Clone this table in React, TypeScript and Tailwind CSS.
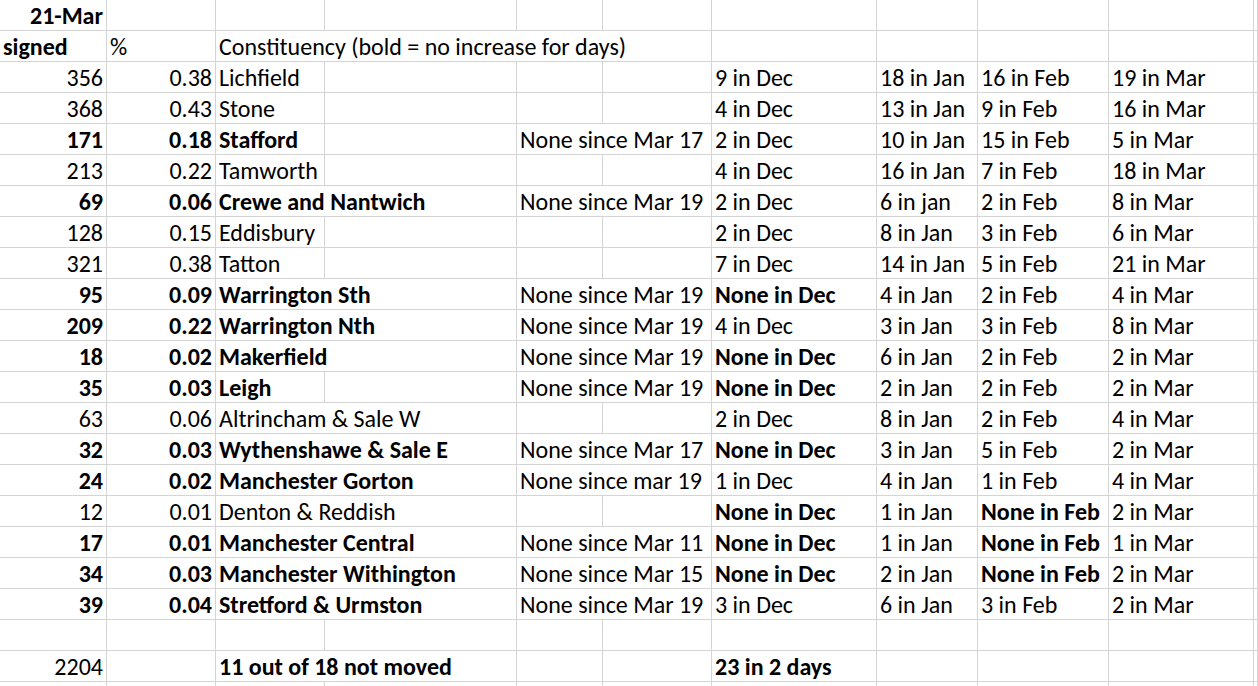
type Cell = {
  text?: string;
  right?: boolean;
  bold?: boolean;
  span?: number;
};

type Row = {
  signed: string;
  pct: string;
  name: string;
  since?: string;
  dec: string;
  jan: string;
  feb: string;
  mar: string;
  bold?: boolean;
};

const rows: Row[] = [
  { signed: '356', pct: '0.38', name: 'Lichfield', dec: '9 in Dec', jan: '18 in Jan', feb: '16 in Feb', mar: '19 in Mar' },
  { signed: '368', pct: '0.43', name: 'Stone', dec: '4 in Dec', jan: '13 in Jan', feb: '9 in Feb', mar: '16 in Mar' },
  { signed: '171', pct: '0.18', name: 'Stafford', since: 'None since Mar 17', dec: '2 in Dec', jan: '10 in Jan', feb: '15 in Feb', mar: '5 in Mar', bold: true },
  { signed: '213', pct: '0.22', name: 'Tamworth', dec: '4 in Dec', jan: '16 in Jan', feb: '7 in Feb', mar: '18 in Mar' },
  { signed: '69', pct: '0.06', name: 'Crewe and Nantwich', since: 'None since Mar 19', dec: '2 in Dec', jan: '6 in jan', feb: '2 in Feb', mar: '8 in Mar', bold: true },
  { signed: '128', pct: '0.15', name: 'Eddisbury', dec: '2 in Dec', jan: '8 in Jan', feb: '3 in Feb', mar: '6 in Mar' },
  { signed: '321', pct: '0.38', name: 'Tatton', dec: '7 in Dec', jan: '14 in Jan', feb: '5 in Feb', mar: '21 in Mar' },
  { signed: '95', pct: '0.09', name: 'Warrington Sth', since: 'None since Mar 19', dec: 'None in Dec', jan: '4 in Jan', feb: '2 in Feb', mar: '4 in Mar', bold: true },
  { signed: '209', pct: '0.22', name: 'Warrington Nth', since: 'None since Mar 19', dec: '4 in Dec', jan: '3 in Jan', feb: '3 in Feb', mar: '8 in Mar', bold: true },
  { signed: '18', pct: '0.02', name: 'Makerfield', since: 'None since Mar 19', dec: 'None in Dec', jan: '6 in Jan', feb: '2 in Feb', mar: '2 in Mar', bold: true },
  { signed: '35', pct: '0.03', name: 'Leigh', since: 'None since Mar 19', dec: 'None in Dec', jan: '2 in Jan', feb: '2 in Feb', mar: '2 in Mar', bold: true },
  { signed: '63', pct: '0.06', name: 'Altrincham & Sale W', dec: '2 in Dec', jan: '8 in Jan', feb: '2 in Feb', mar: '4 in Mar' },
  { signed: '32', pct: '0.03', name: 'Wythenshawe & Sale E', since: 'None since Mar 17', dec: 'None in Dec', jan: '3 in Jan', feb: '5 in Feb', mar: '2 in Mar', bold: true },
  { signed: '24', pct: '0.02', name: 'Manchester Gorton', since: 'None since mar 19', dec: '1 in Dec', jan: '4 in Jan', feb: '1 in Feb', mar: '4 in Mar', bold: true },
  { signed: '12', pct: '0.01', name: 'Denton & Reddish', dec: 'None in Dec', jan: '1 in Jan', feb: 'None in Feb', mar: '2 in Mar' },
  { signed: '17', pct: '0.01', name: 'Manchester Central', since: 'None since Mar 11', dec: 'None in Dec', jan: '1 in Jan', feb: 'None in Feb', mar: '1 in Mar', bold: true },
  { signed: '34', pct: '0.03', name: 'Manchester Withington', since: 'None since Mar 15', dec: 'None in Dec', jan: '2 in Jan', feb: 'None in Feb', mar: '2 in Mar', bold: true },
  { signed: '39', pct: '0.04', name: 'Stretford & Urmston', since: 'None since Mar 19', dec: '3 in Dec', jan: '6 in Jan', feb: '3 in Feb', mar: '2 in Mar', bold: true },
];

const spanClass: Record<number, string> = {
  1: 'col-span-1',
  2: 'col-span-2',
  4: 'col-span-4',
};

function GridCell({ text, right, bold, span = 1 }: Cell) {
  return (
    <div
      className={`${spanClass[span]} h-[31px] pt-[1px] border-r border-b border-[#d4d4d4] whitespace-nowrap overflow-visible leading-[30px] ${
        right ? 'text-right pr-[3px]' : 'text-left pl-[3px]'
      } ${bold ? 'font-bold' : ''}`}
    >
      {text}
    </div>
  );
}

function SheetRow({ cells }: { cells: Cell[] }) {
  return (
    <>
      {cells.map((c, i) => (
        <GridCell key={i} {...c} />
      ))}
    </>
  );
}

const isBoldCell = (t: string) => t.startsWith('None in');

export default function App() {
  const empty = (n: number): Cell[] => Array.from({ length: n }, () => ({}));

  return (
    <div
      className="w-[1258px] h-[686px] overflow-hidden bg-white text-black text-[24px]"
      style={{ fontFamily: 'Carlito, Lato, "Open Sans", sans-serif' }}
    >
      <div className="grid grid-cols-[107px_109px_109px_192px_86px_109px_165px_101px_131px_145px_1fr]">
        <SheetRow cells={[{ text: '21-Mar', right: true, bold: true }, ...empty(10)]} />
        <SheetRow
          cells={[
            { text: 'signed', bold: true },
            { text: '%' },
            { text: 'Constituency (bold = no increase for days)', span: 4 },
            ...empty(5),
          ]}
        />
        {rows.map((r) => {
          const nameSpan = r.name.length >= 10 ? 2 : 1;
          const cells: Cell[] = [
            { text: r.signed, right: true, bold: r.bold },
            { text: r.pct, right: true, bold: r.bold },
            { text: r.name, bold: r.bold, span: nameSpan },
          ];
          if (nameSpan === 1) cells.push({});
          if (r.since) cells.push({ text: r.since, span: 2 });
          else cells.push({}, {});
          cells.push(
            { text: r.dec, bold: isBoldCell(r.dec) },
            { text: r.jan },
            { text: r.feb, bold: isBoldCell(r.feb) },
            { text: r.mar },
            {},
          );
          return <SheetRow key={r.name} cells={cells} />;
        })}
        <SheetRow cells={empty(11)} />
        <SheetRow
          cells={[
            { text: '2204', right: true },
            {},
            { text: '11 out of 18 not moved', bold: true, span: 2 },
            {},
            {},
            { text: '23 in 2 days', bold: true },
            {},
            {},
            {},
            {},
          ]}
        />
        <SheetRow cells={empty(11)} />
      </div>
    </div>
  );
}
